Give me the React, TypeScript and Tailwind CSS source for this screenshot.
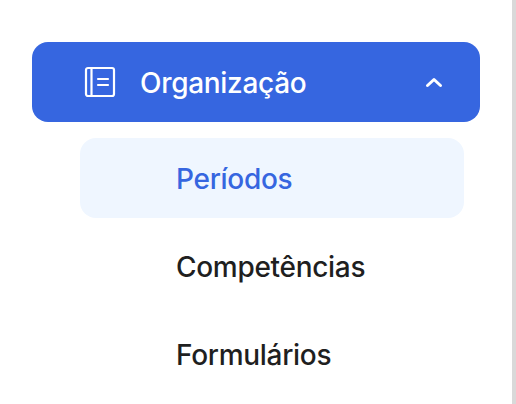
import React from 'react';

const subItems = [
  { label: 'Períodos', active: true },
  { label: 'Competências', active: false },
  { label: 'Formulários', active: false },
];

const BookIcon = () => (
  <svg width="32" height="32" viewBox="0 0 32 32" fill="none" stroke="currentColor" strokeWidth="2.2" strokeLinecap="round" strokeLinejoin="round">
    <rect x="2" y="2" width="28" height="28" rx="2" />
    <path d="M7.5 2v28" />
    <path d="M14 13h10" />
    <path d="M14 19h10" />
  </svg>
);

const ChevronUp = () => (
  <svg width="20" height="12" viewBox="0 0 20 12" fill="none" stroke="currentColor" strokeWidth="3" strokeLinecap="round" strokeLinejoin="round">
    <path d="M3.5 9.5 10 3.5l6.5 6" />
  </svg>
);

export default function App() {
  return (
    <div className="flex h-[404px] w-[516px] overflow-hidden bg-white font-['Inter',sans-serif]">
      <nav className="flex w-[512px] flex-col pl-8 pr-8 pt-[42px]">
        <button className="flex h-20 w-[448px] items-center rounded-2xl bg-[#3666e0] pl-[52px] pr-9 text-white">
          <BookIcon />
          <span className="ml-[24px] pt-px text-[28px] font-[450] tracking-[-0.3px]">Organização</span>
          <span className="ml-auto">
            <ChevronUp />
          </span>
        </button>
        <ul className="mt-4 flex flex-col gap-2 pl-12 pr-4">
          {subItems.map(item => (
            <li
              key={item.label}
              className={
                item.active
                  ? 'flex h-20 items-center rounded-2xl bg-[#eff6ff] pl-24 pt-px text-[28px] font-[450] tracking-[-0.3px] text-[#3666e0]'
                  : 'flex h-20 items-center rounded-2xl pl-24 pt-px text-[28px] font-[450] tracking-[-0.3px] text-[#1f1f1f]'
              }
            >
              {item.label}
            </li>
          ))}
        </ul>
      </nav>
      <div className="h-full w-1 bg-[#d9d9d9]" />
    </div>
  );
}
